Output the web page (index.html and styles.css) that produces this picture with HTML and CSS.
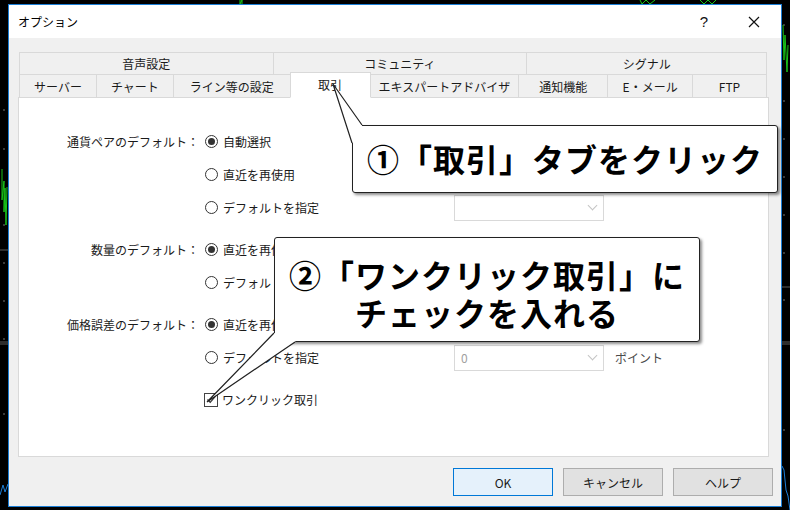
FILE: index.html
```html
<!DOCTYPE html>
<html lang="ja">
<head>
  <meta charset="UTF-8">
  <title>オプション</title>
  <link rel="stylesheet" href="styles.css">
</head>
<body>

  <!-- chart behind the dialog -->
  <svg class="chart" width="790" height="510" viewBox="0 0 790 510">
    <g stroke="#5a5a5a" stroke-width="1">
      <line x1="0" y1="250" x2="8" y2="250"/>
      <line x1="0" y1="342" x2="8" y2="342"/>
      <line x1="0" y1="344" x2="8" y2="344"/>
      <line x1="782" y1="287" x2="790" y2="287"/>
      <line x1="782" y1="342" x2="790" y2="342"/>
      <line x1="782" y1="344" x2="790" y2="344"/>
    </g>
    <g stroke="#777" stroke-width="1">
      <line x1="3" y1="110" x2="5" y2="110"/>
      <line x1="3" y1="149" x2="5" y2="149"/>
      <line x1="3" y1="225" x2="5" y2="225"/>
      <line x1="3" y1="263" x2="5" y2="263"/>
      <line x1="3" y1="301" x2="5" y2="301"/>
      <line x1="3" y1="339" x2="5" y2="339"/>
      <line x1="3" y1="414" x2="5" y2="414"/>
      <line x1="783" y1="25" x2="785" y2="25"/>
      <line x1="783" y1="101" x2="785" y2="101"/>
      <line x1="783" y1="139" x2="785" y2="139"/>
      <line x1="783" y1="177" x2="785" y2="177"/>
      <line x1="783" y1="215" x2="785" y2="215"/>
      <line x1="783" y1="253" x2="785" y2="253"/>
      <line x1="783" y1="300" x2="785" y2="300"/>
      <line x1="783" y1="430" x2="785" y2="430"/>
    </g>
    <g stroke="#19c419" stroke-width="1" fill="none">
      <polyline points="2,169 2,200 4,181 4,212 5,188 6,225 7,187"/>
      <polyline points="240,0 240,4 242,0 242,4"/>
      <polyline points="640,0 642,4 646,0 650,4 655,0"/>
      <polyline points="700,0 704,4 708,0 712,4 716,0"/>
      <polyline points="783,25 784,60 785,35 787,72 788,45"/>
    </g>
    <g stroke="#1e7fd8" stroke-width="1" fill="none">
      <polyline points="0,495 3,485 5,492 8,484"/>
      <polyline points="782,466 784,470 786,490 788,496 790,510"/>
    </g>
  </svg>

  <div class="dialog">
    <div class="titlebar">
      <span class="title">オプション</span>
      <span class="help">?</span>
      <svg class="close" width="12" height="12" viewBox="0 0 12 12">
        <path d="M1 1 L11 11 M11 1 L1 11" stroke="#111" stroke-width="1.2" fill="none"/>
      </svg>
    </div>

    <div class="dialog-body">
      <div class="tabs">
        <div class="tab-row">
          <div class="tab" style="width:255px">音声設定</div>
          <div class="tab" style="width:255px">コミュニティ</div>
          <div class="tab" style="width:241px">シグナル</div>
        </div>
        <div class="tab-row lower">
          <div class="tab" style="width:78px">サーバー</div>
          <div class="tab" style="width:78px">チャート</div>
          <div class="tab" style="width:118px">ライン等の設定</div>
          <div class="tab selected" style="width:81px">取引</div>
          <div class="tab" style="width:150px">エキスパートアドバイザ</div>
          <div class="tab" style="width:90px">通知機能</div>
          <div class="tab" style="width:86px">E・メール</div>
          <div class="tab" style="width:75px">FTP</div>
        </div>
      </div>

      <div class="panel">
        <div class="group">
          <div class="label">通貨ペアのデフォルト：</div>
          <div class="option"><span class="radio checked"></span>自動選択</div>
          <div></div><div></div>
          <div></div>
          <div class="option"><span class="radio"></span>直近を再使用</div>
          <div></div><div></div>
          <div></div>
          <div class="option"><span class="radio"></span>デフォルトを指定</div>
          <div class="combo"><span class="combo-value"></span><span class="chevron"></span></div>
          <div></div>
        </div>

        <div class="group">
          <div class="label">数量のデフォルト：</div>
          <div class="option"><span class="radio checked"></span>直近を再使用</div>
          <div></div><div></div>
          <div></div>
          <div class="option"><span class="radio"></span>デフォルトを指定</div>
          <div class="combo"><span class="combo-value"></span><span class="chevron"></span></div>
          <div></div>
        </div>

        <div class="group">
          <div class="label">価格誤差のデフォルト：</div>
          <div class="option"><span class="radio checked"></span>直近を再使用</div>
          <div></div><div></div>
          <div></div>
          <div class="option"><span class="radio"></span>デフォルトを指定</div>
          <div class="combo"><span class="combo-value">0</span><span class="chevron"></span></div>
          <div class="unit">ポイント</div>
        </div>

        <div class="group check-row">
          <div></div>
          <div class="option">
            <span class="checkbox">
              <svg width="11" height="11" viewBox="0 0 11 11"><path d="M1.5 5.5 L4.2 8.3 L9.6 2.2" stroke="#333" stroke-width="1.2" fill="none"/></svg>
            </span>ワンクリック取引
          </div>
        </div>
      </div>

      <div class="buttons">
        <button class="btn default">OK</button>
        <button class="btn">キャンセル</button>
        <button class="btn">ヘルプ</button>
      </div>
    </div>
  </div>

  <!-- tutorial callouts -->
  <div class="callout callout-tab">①「取引」タブをクリック</div>
  <div class="callout callout-check">②「ワンクリック取引」に<br>チェックを入れる</div>

  <svg class="pointers" width="790" height="510" viewBox="0 0 790 510">
    <polygon points="333,84 362,125 362,127.5 354,127.5 354,142 352,143" fill="#fff"/>
    <polyline points="352,143 333,84 362,125" fill="none" stroke="#222" stroke-width="1.2"/>
    <polygon points="207,402 274,333 276,333 276,340 296,340 295,342" fill="#fff"/>
    <polyline points="274,333 207,402 295,342" fill="none" stroke="#222" stroke-width="1.2"/>
  </svg>

</body>
</html>
```

FILE: styles.css
```css
/* Page */
* {
  box-sizing: border-box;
}

body {
  margin: 0;
  width: 790px;
  height: 510px;
  overflow: hidden;
  position: relative;
  background: #000;
  font-family: "Noto Sans CJK JP", "Noto Sans", sans-serif;
  font-size: 12px;
  color: #1a1a1a;
}

/* Chart behind */
.chart {
  position: absolute;
  top: 0;
  left: 0;
  z-index: 0;
}

/* Dialog window */
.dialog {
  position: relative;
  z-index: 1;
  margin: 4px 0 0 8px;
  width: 774px;
  height: 503px;
  border: 1px solid #1a7ed6;
  background: #f0f0f0;
}

.titlebar {
  height: 33px;
  background: #fff;
  display: flex;
  align-items: center;
  padding-left: 9px;
}

.title {
  flex: 1;
  font-size: 12px;
  color: #000;
}

.help {
  font-family: "Liberation Sans", sans-serif;
  font-size: 15px;
  color: #111;
  margin-right: 40px;
}

.close {
  margin-right: 21px;
}

.dialog-body {
  padding: 14px 0 0 9px;
}

/* Tabs */
.tabs {
  margin-left: 1px;
  width: 748px;
}

.tab-row {
  display: flex;
  align-items: flex-start;
}

.tab {
  height: 23px;
  border: 1px solid #d9d9d9;
  margin-left: -1px;
  background: #f0f0f0;
  display: flex;
  align-items: center;
  justify-content: center;
  color: #1a1a1a;
  white-space: nowrap;
}

.tab:first-child {
  margin-left: 0;
}

.tab-row.lower {
  margin-top: -1px;
}

.tab-row.lower .tab {
  height: 24px;
}

.tab-row.lower .tab.selected {
  height: 26px;
  margin-top: -2px;
  background: #fff;
  border-bottom-color: #fff;
  position: relative;
  z-index: 2;
  padding-bottom: 2px;
}

/* Tab page */
.panel {
  position: relative;
  z-index: 1;
  margin-top: -1px;
  width: 751px;
  height: 360px;
  background: #fff;
  border: 1px solid #d9d9d9;
  padding-top: 27px;
}

.group {
  display: grid;
  grid-template-columns: 186px 249px 150px auto;
  grid-auto-rows: 33px;
  align-items: center;
  margin-bottom: 9px;
}

.group.check-row {
  margin-top: 1px;
}

.label {
  text-align: right;
  padding-right: 6px;
  white-space: nowrap;
}

.option {
  display: flex;
  align-items: center;
  white-space: nowrap;
}

.radio {
  width: 13px;
  height: 13px;
  border: 1px solid #333;
  border-radius: 50%;
  margin-right: 5px;
  display: flex;
  align-items: center;
  justify-content: center;
  background: #fff;
}

.radio.checked::after {
  content: "";
  width: 7px;
  height: 7px;
  border-radius: 50%;
  background: #333;
}

.checkbox {
  width: 14px;
  height: 14px;
  border: 1px solid #444;
  margin-left: -1px;
  margin-right: 4px;
  display: flex;
  align-items: center;
  justify-content: center;
}

.combo {
  height: 26px;
  border: 1px solid #d9d9d9;
  background: #fff;
  display: flex;
  align-items: center;
  justify-content: space-between;
  padding: 0 7px 0 6px;
  color: #a0a0a0;
}

.chevron {
  width: 7px;
  height: 7px;
  border-right: 1px solid #c4c4c4;
  border-bottom: 1px solid #c4c4c4;
  transform: rotate(45deg);
  margin-top: -4px;
}

.unit {
  padding-left: 11px;
  color: #4a4a4a;
}

/* Dialog buttons */
.buttons {
  display: flex;
  justify-content: flex-end;
  gap: 10px;
  padding-right: 8px;
  margin-top: 11px;
}

.btn {
  width: 100px;
  height: 28px;
  border: 1px solid #adadad;
  background: #e1e1e1;
  font-family: inherit;
  font-size: 12px;
  color: #1a1a1a;
  padding: 0;
}

.btn.default {
  border-color: #0078d7;
  background: #e5f1fb;
}

/* Callouts */
.callout {
  position: absolute;
  z-index: 5;
  width: 426px;
  background: #fff;
  border: 1px solid #222;
  border-radius: 3px;
  box-shadow: 2px 2px 3px rgba(0, 0, 0, 0.45);
  font-size: 32px;
  font-weight: bold;
  letter-spacing: 1px;
  line-height: 38px;
  color: #000;
  text-align: center;
}

.callout-tab {
  left: 352px;
  top: 125px;
  height: 68px;
  padding-top: 13px;
}

.callout-check {
  left: 274px;
  top: 237px;
  height: 105px;
  padding-top: 17px;
}

.pointers {
  position: absolute;
  top: 0;
  left: 0;
  z-index: 6;
  pointer-events: none;
}
```
